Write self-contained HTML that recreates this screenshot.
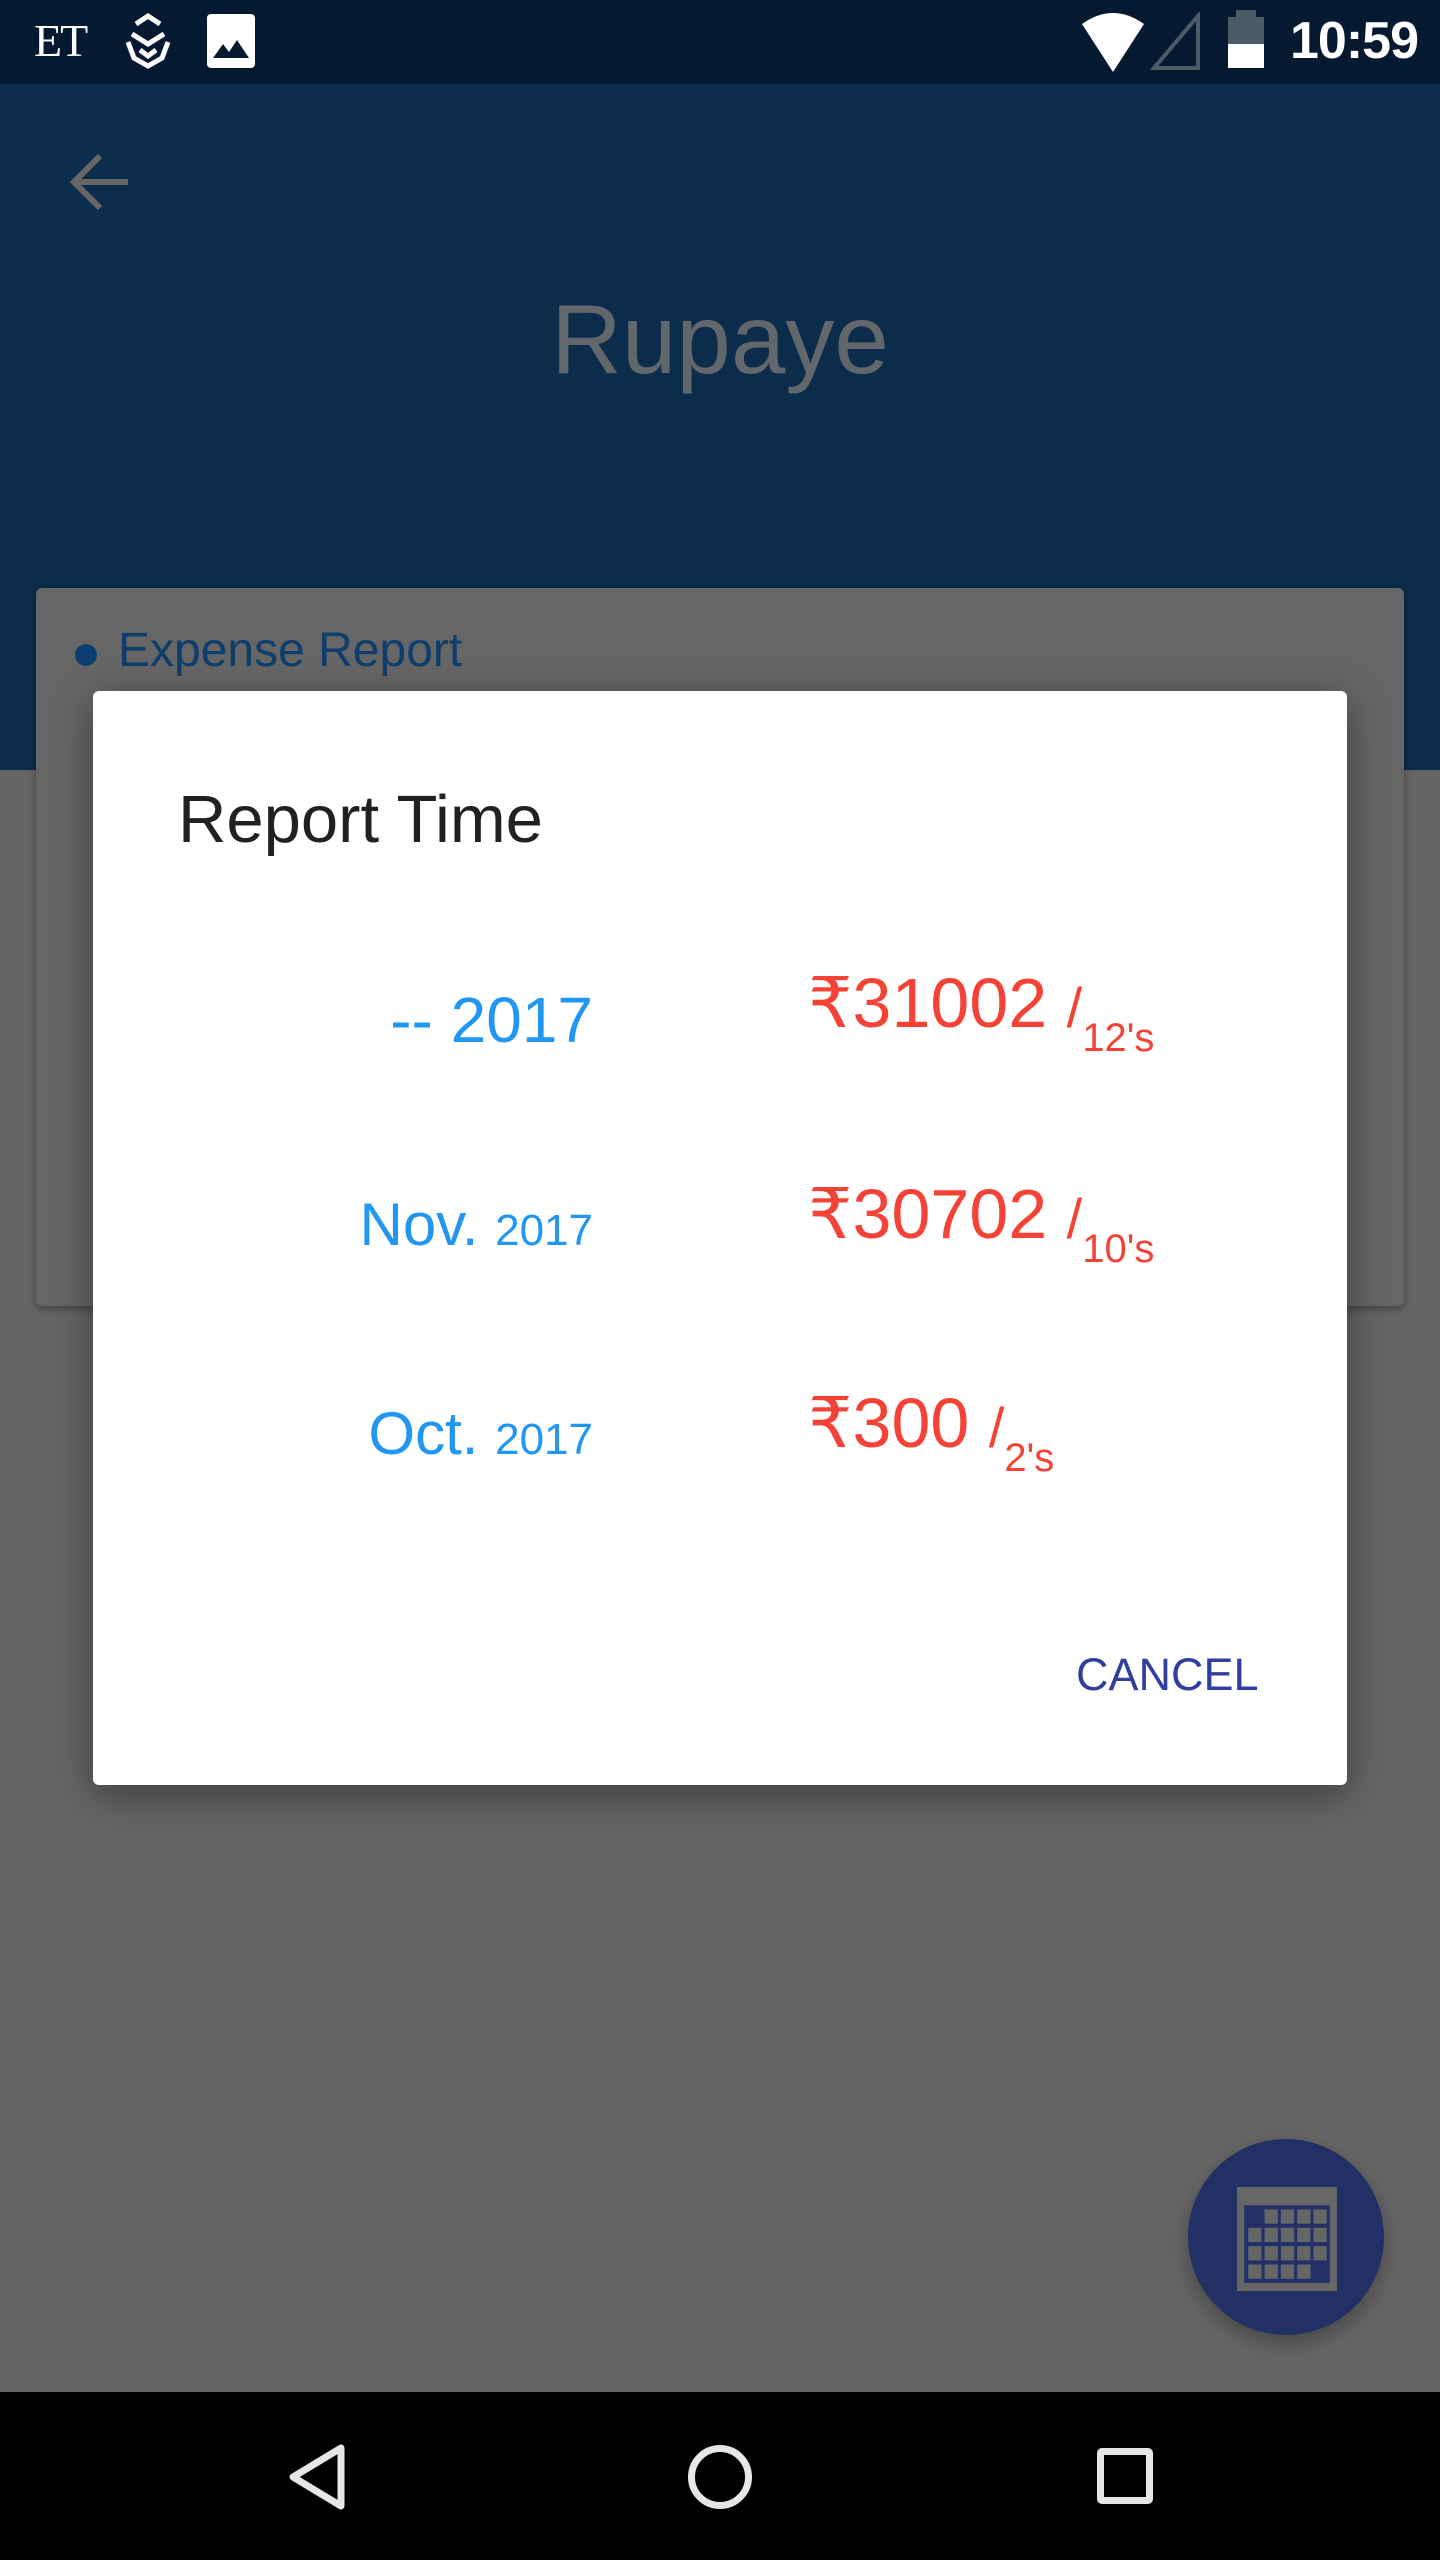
<!DOCTYPE html>
<html><head><meta charset="utf-8">
<style>
*{margin:0;padding:0;box-sizing:border-box}
body{width:1440px;height:2560px;position:relative;overflow:hidden;background:#656565;font-family:"Liberation Sans","DejaVu Sans",sans-serif}
.abs{position:absolute}
.status{left:0;top:0;width:1440px;height:84px;background:#051a31}
.appbar{left:0;top:84px;width:1440px;height:686px;background:#0b2d4b}
.card{left:36px;top:588px;width:1368px;height:718px;background:#666;border-radius:6px;box-shadow:0 3px 8px rgba(0,0,0,.35)}
.dialog{left:93px;top:691px;width:1254px;height:1094px;background:#fff;border-radius:6px;box-shadow:0 10px 40px rgba(0,0,0,.4)}
.blue{color:#2196f3}
.red{color:#f44336}
.t{white-space:nowrap;line-height:1}
.nav{left:0;top:2392px;width:1440px;height:168px;background:#000}
.sub{font-size:40px;position:relative;top:24px}
.sl{font-size:56px}
</style></head><body>
<div class="abs status"></div>
<div class="abs t" style="left:34px;top:18px;font-family:'Liberation Serif',serif;font-size:46px;color:#fff;letter-spacing:-2px">ET</div>
<svg class="abs" style="left:120px;top:12px" width="56" height="60" viewBox="0 0 56 60"><g fill="none" stroke="#fff" stroke-width="5"><path d="M16 12 L28 4 L40 12"/><path d="M12 22 L28 32 L44 22"/><path d="M8 30 L14 46 L28 54 L42 46 L48 30"/><path d="M20 38 L28 44 L36 38"/></g></svg>
<svg class="abs" style="left:207px;top:14px" width="48" height="54" viewBox="0 0 48 54"><rect x="0" y="0" width="48" height="54" rx="4" fill="#fff"/><path d="M6 44 L16 30 L22 38 L30 26 L42 44 Z" fill="#051a31"/></svg>
<svg class="abs" style="left:1080px;top:10px" width="66" height="64" viewBox="0 0 66 64"><path d="M2 14 Q33 -8 64 14 L33 62 Z" fill="#fff"/></svg>
<svg class="abs" style="left:1150px;top:12px" width="52" height="60" viewBox="0 0 52 60"><path d="M48 4 L48 56 L4 56 Z" fill="none" stroke="#4d5b66" stroke-width="4"/></svg>
<div class="abs" style="left:1236px;top:10px;width:20px;height:8px;background:#4d5b66"></div>
<div class="abs" style="left:1228px;top:17px;width:36px;height:27px;background:#4d5b66"></div>
<div class="abs" style="left:1228px;top:44px;width:36px;height:24px;background:#fff"></div>
<div class="abs t" style="left:1290px;top:15px;font-size:52px;color:#fff;font-weight:bold;letter-spacing:-1px">10:59</div>

<div class="abs appbar"></div>
<svg class="abs" style="left:64px;top:150px" width="68" height="64" viewBox="0 0 68 64"><g fill="none" stroke="#666" stroke-width="6"><path d="M64 32 H10"/><path d="M36 6 L10 32 L36 58"/></g></svg>
<div class="abs t" style="left:0;width:1440px;text-align:center;top:290px;font-size:98px;color:#62676b">Rupaye</div>

<div class="abs card"></div>
<div class="abs" style="left:75px;top:644px;width:22px;height:22px;border-radius:50%;background:#0b3e6e"></div>
<div class="abs t" style="left:118px;top:627px;font-size:48px;color:#0e3e6c">Expense Report</div>

<div class="abs dialog"></div>
<div class="abs t" style="left:178px;top:786px;font-size:67px;color:#212121">Report Time</div>

<div class="abs t blue" style="right:847px;top:988px;font-size:64px">-- 2017</div>
<div class="abs t blue" style="right:847px;top:1195px;font-size:60px">Nov. <span style="font-size:44px">2017</span></div>
<div class="abs t blue" style="right:847px;top:1404px;font-size:60px">Oct. <span style="font-size:44px">2017</span></div>

<div class="abs t red" style="left:808px;top:968px;font-size:70px">₹31002 <span class="sl">/</span><span class="sub">12's</span></div>
<div class="abs t red" style="left:808px;top:1179px;font-size:70px">₹30702 <span class="sl">/</span><span class="sub">10's</span></div>
<div class="abs t red" style="left:808px;top:1388px;font-size:70px">₹300 <span class="sl">/</span><span class="sub">2's</span></div>

<div class="abs t" style="left:1076px;top:1652px;font-size:45px;color:#303f9f">CANCEL</div>

<div class="abs" style="left:1188px;top:2139px;width:196px;height:196px;border-radius:50%;background:#233066;box-shadow:0 8px 20px rgba(0,0,0,.3)"></div>
<svg class="abs" style="left:1237px;top:2187px" width="100" height="104" viewBox="0 0 98 102"><rect x="0" y="0" width="98" height="102" fill="#666"/><rect x="7" y="18" width="84" height="76" fill="#233066"/><g fill="#666">
<rect x="27" y="22" width="13" height="14"/><rect x="43" y="22" width="13" height="14"/><rect x="59" y="22" width="13" height="14"/><rect x="75" y="22" width="13" height="14"/>
<rect x="11" y="40" width="13" height="14"/><rect x="27" y="40" width="13" height="14"/><rect x="43" y="40" width="13" height="14"/><rect x="59" y="40" width="13" height="14"/><rect x="75" y="40" width="13" height="14"/>
<rect x="11" y="58" width="13" height="14"/><rect x="27" y="58" width="13" height="14"/><rect x="43" y="58" width="13" height="14"/><rect x="59" y="58" width="13" height="14"/><rect x="75" y="58" width="13" height="14"/>
<rect x="11" y="76" width="13" height="14"/><rect x="27" y="76" width="13" height="14"/><rect x="43" y="76" width="13" height="14"/><rect x="59" y="76" width="13" height="14"/></g></svg>

<div class="abs nav"></div>
<svg class="abs" style="left:285px;top:2442px" width="66" height="70" viewBox="0 0 66 70"><path d="M56 6 L8 35 L56 64 Z" fill="none" stroke="#e6e6e6" stroke-width="7" stroke-linejoin="round"/></svg>
<div class="abs" style="left:688px;top:2445px;width:64px;height:64px;border-radius:50%;border:7px solid #e6e6e6"></div>
<div class="abs" style="left:1097px;top:2448px;width:56px;height:56px;border-radius:5px;border:7px solid #e6e6e6"></div>
</body></html>
